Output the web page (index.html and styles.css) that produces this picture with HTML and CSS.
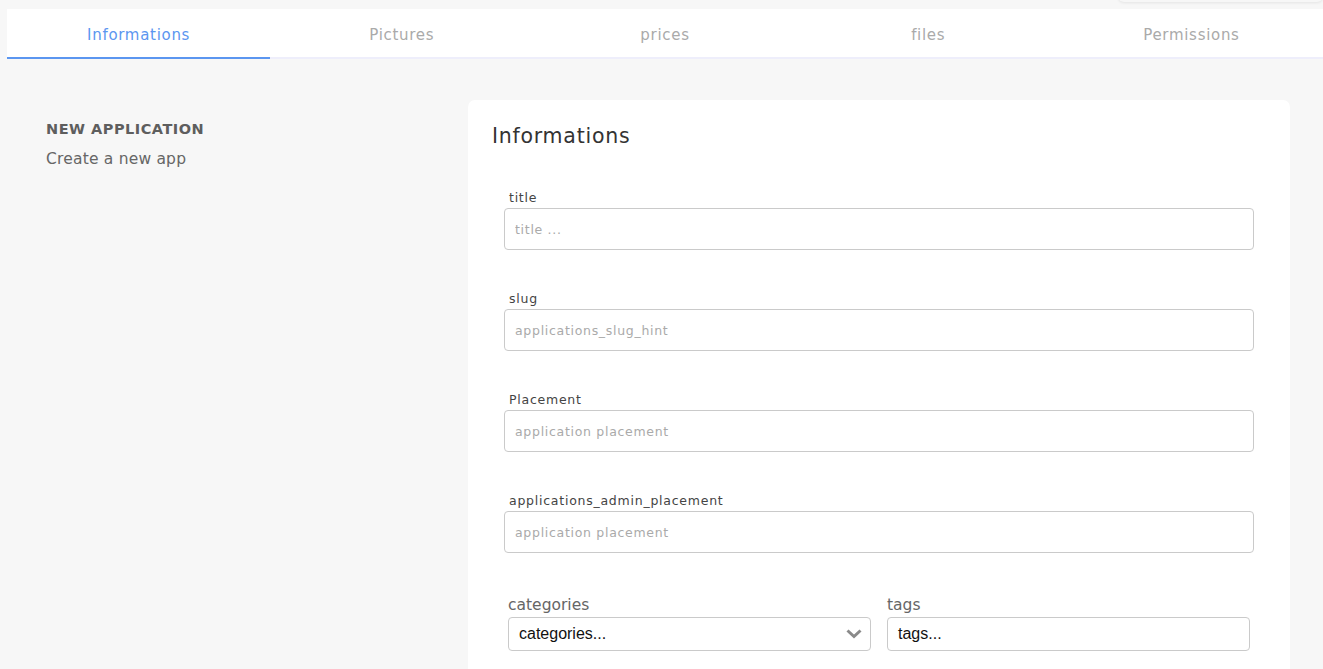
FILE: index.html
```html
<!DOCTYPE html>
<html lang="en">
<head>
    <meta charset="UTF-8">
    <title>New application</title>
    <link rel="stylesheet" href="styles.css">
</head>
<body>
    <div class="corner-shadow"></div>

    <nav class="tabs">
        <a class="tab active">Informations</a>
        <a class="tab">Pictures</a>
        <a class="tab">prices</a>
        <a class="tab">files</a>
        <a class="tab">Permissions</a>
    </nav>

    <main class="page">
        <aside class="intro">
            <h3>NEW APPLICATION</h3>
            <p>Create a new app</p>
        </aside>

        <section class="card">
            <h2>Informations</h2>

            <div class="fields">
                <div class="field">
                    <label>title</label>
                    <input type="text" placeholder="title ...">
                </div>
                <div class="field">
                    <label>slug</label>
                    <input type="text" placeholder="applications_slug_hint">
                </div>
                <div class="field">
                    <label>Placement</label>
                    <input type="text" placeholder="application placement">
                </div>
                <div class="field">
                    <label>applications_admin_placement</label>
                    <input type="text" placeholder="application placement">
                </div>

                <div class="pair">
                    <div class="pick">
                        <label>categories</label>
                        <div class="select-box">
                            <span>categories...</span>
                            <svg class="chevron" viewBox="0 0 16 10" width="16" height="10">
                                <path d="M1.5 1.5 L8 7.5 L14.5 1.5" fill="none" stroke="#8a8a8a" stroke-width="3"/>
                            </svg>
                        </div>
                    </div>
                    <div class="pick">
                        <label>tags</label>
                        <div class="select-box">
                            <span>tags...</span>
                        </div>
                    </div>
                </div>
            </div>
        </section>
    </main>
</body>
</html>
```

FILE: styles.css
```css
* {
    margin: 0;
    padding: 0;
    box-sizing: border-box;
}

body {
    background-color: #f7f7f7;
    font-family: 'DejaVu Sans', Inter, sans-serif;
    color: #444;
    overflow: hidden;
}

.corner-shadow {
    position: absolute;
    top: -10px;
    right: 0;
    width: 205px;
    height: 12px;
    background: #f7f7f7;
    border-radius: 6px;
    box-shadow: 0 1px 3px rgba(0, 0, 0, 0.08);
}

/* Tabs */
.tabs {
    display: flex;
    margin: 9px 0 0 7px;
    background-color: #fff;
    border-bottom: 2px solid #eeeefb;
}

.tab {
    flex: 1;
    height: 50px;
    line-height: 52px;
    text-align: center;
    font-size: 15px;
    letter-spacing: 0.7px;
    color: #aaa;
    margin-bottom: -2px;
    border-bottom: 2px solid transparent;
}

.tab.active {
    color: #5b96f0;
    border-bottom-color: #5b96f0;
}

/* Page layout */
.page {
    display: grid;
    grid-template-columns: 422px 822px;
    padding: 41px 0 0 46px;
}

.intro h3 {
    font-size: 14.5px;
    font-weight: 600;
    letter-spacing: 0.5px;
    color: #5e5e5e;
    margin-top: 21px;
}

.intro p {
    font-size: 15.5px;
    letter-spacing: 0.2px;
    color: #666;
    margin-top: 13px;
}

.card {
    background-color: #fff;
    border-radius: 7px;
    padding: 24px 36px 40px 24px;
    min-height: 600px;
}

.card h2 {
    font-size: 20.5px;
    font-weight: 400;
    letter-spacing: 0.75px;
    color: #333;
    margin-bottom: 42px;
}

.fields {
    padding-left: 12px;
}

.field {
    margin-bottom: 41px;
}

.field label {
    display: block;
    font-size: 12.5px;
    letter-spacing: 0.75px;
    color: #444;
    padding-left: 5px;
    margin-bottom: 3px;
}

.field input {
    display: block;
    width: 750px;
    height: 42px;
    border: 1px solid #cacaca;
    border-radius: 4px;
    padding: 0 10px;
    font-family: inherit;
    font-size: 12.5px;
    letter-spacing: 0.7px;
    outline: none;
}

.field input::placeholder {
    color: #aaa;
}

/* Categories / tags */
.pair {
    display: flex;
    gap: 16px;
    padding-left: 4px;
    margin-top: 1px;
}

.pick {
    width: 363px;
}

.pick label {
    display: block;
    font-size: 15.5px;
    color: #666;
    line-height: 22px;
    margin-bottom: 1px;
}

.select-box {
    display: flex;
    align-items: center;
    justify-content: space-between;
    height: 34px;
    border: 1px solid #cacaca;
    border-radius: 4px;
    padding: 0 8px 0 10px;
    font-family: 'Liberation Sans', Arial, sans-serif;
    font-size: 16px;
    color: #111;
}

.chevron {
    display: block;
}
```
